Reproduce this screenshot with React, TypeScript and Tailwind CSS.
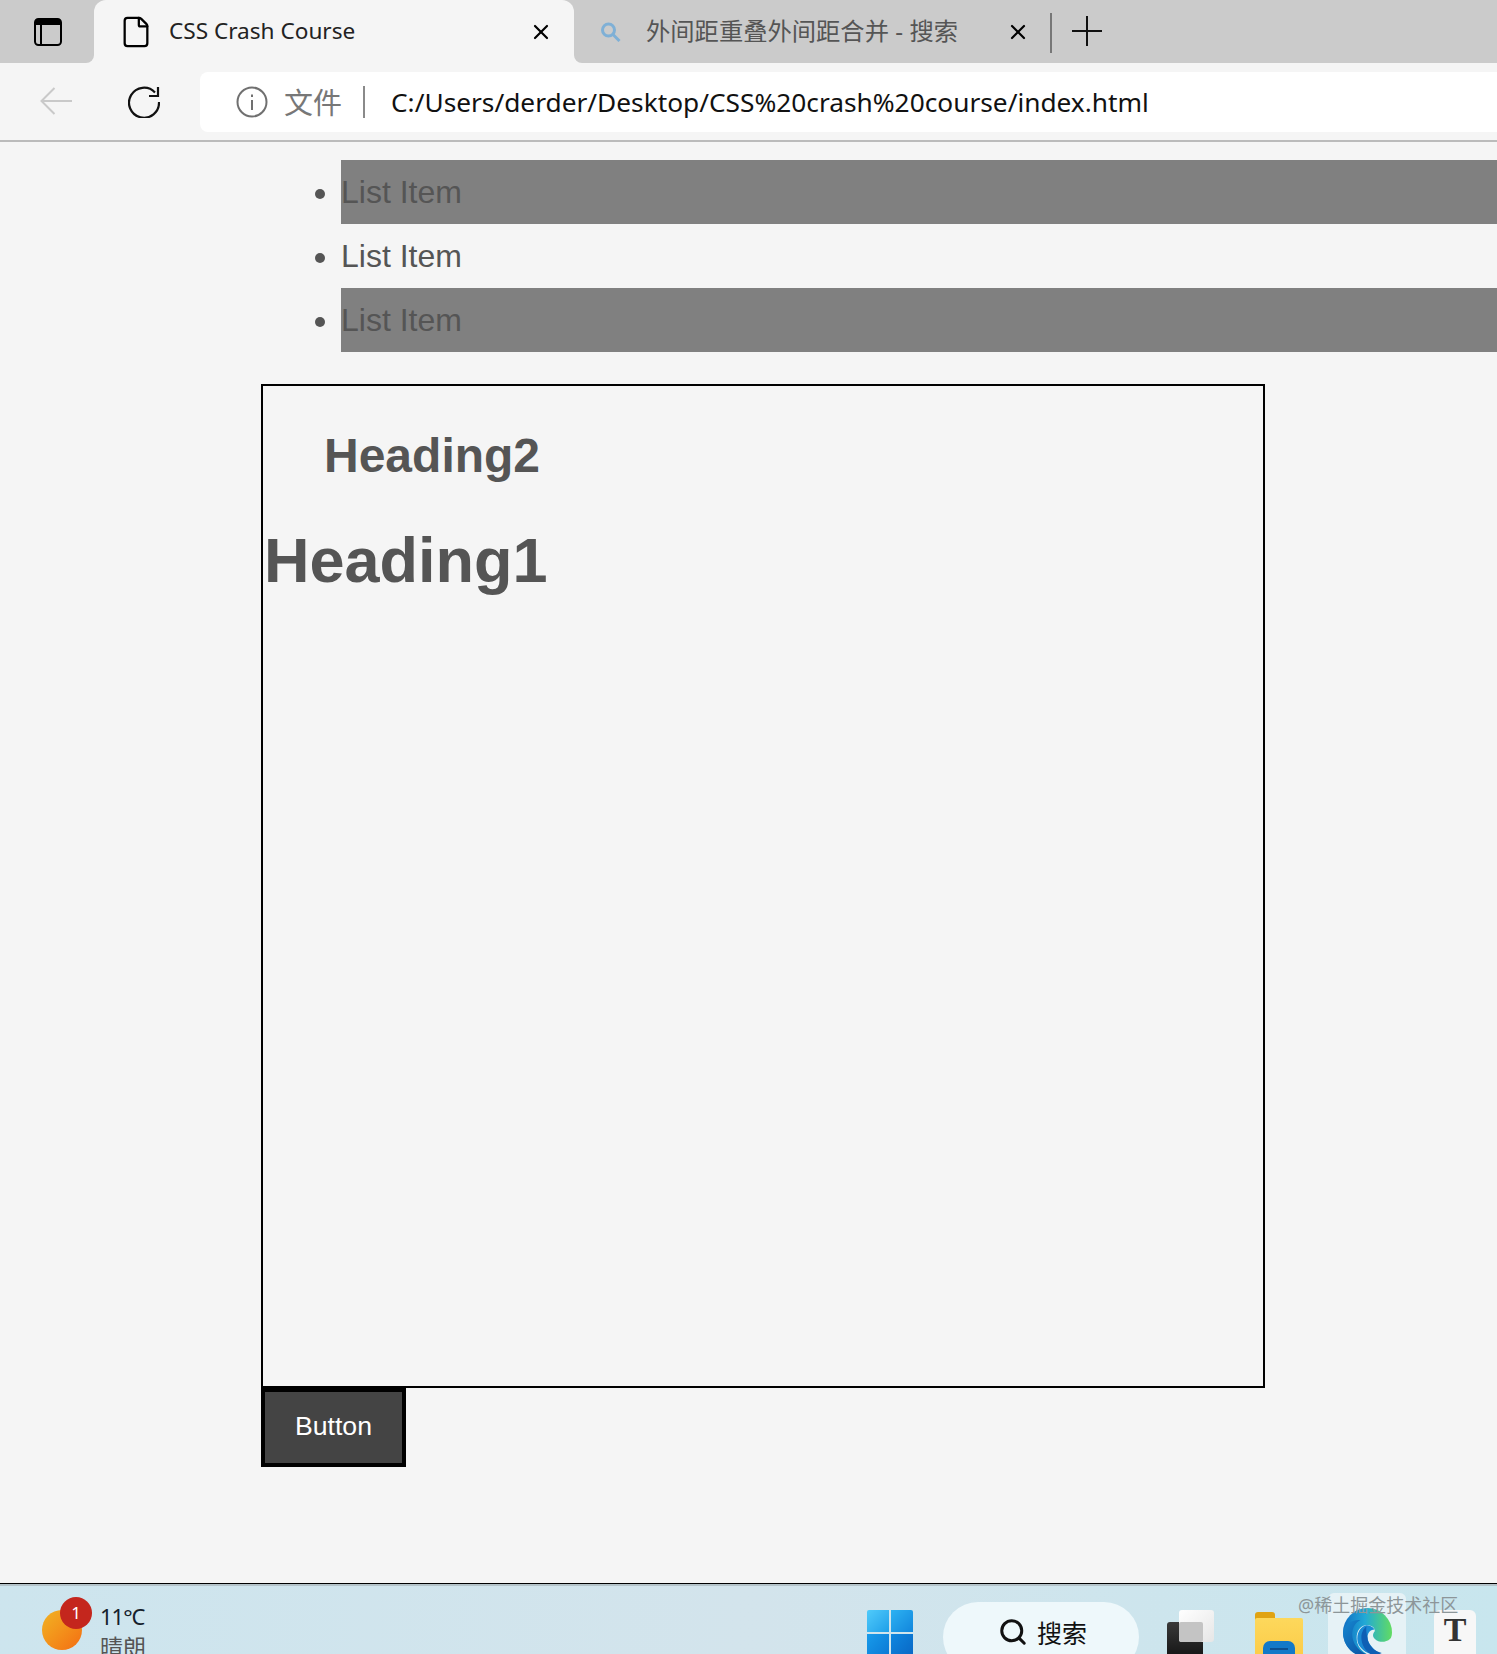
import { File, Search, X } from "lucide-react"

const uiFont = "font-['Noto_Sans','Noto_Sans_CJK_SC',sans-serif]"
const pageFont = "font-['Liberation_Sans',Arial,sans-serif]"

const SidebarIcon = () => (
  <svg width="28" height="28" viewBox="0 0 28 28" fill="none" className="text-black">
    <rect x="1" y="1" width="26" height="26" rx="3.5" stroke="currentColor" strokeWidth="2" />
    <path d="M1 4.5A3.5 3.5 0 0 1 4.5 1h19A3.5 3.5 0 0 1 27 4.5V7H1z" fill="currentColor" />
    <path d="M7 7v20" stroke="currentColor" strokeWidth="2" />
  </svg>
)

const BackIcon = () => (
  <svg width="32" height="28" viewBox="0 0 32 28" fill="none" stroke="#c9c9c9" strokeWidth="2">
    <path d="M32 14H1.5M14.5 1 1.5 14l13 13" />
  </svg>
)

const ReloadIcon = () => (
  <svg width="32" height="32" viewBox="0 0 32 32" fill="none" stroke="#111" strokeWidth="2.2">
    <path d="M27 6.5A15 15 0 1 0 31 16" />
    <path d="M30 1v9h-9" />
  </svg>
)

const InfoIcon = () => (
  <svg width="32" height="32" viewBox="0 0 32 32" fill="none" stroke="#707070" strokeWidth="2">
    <circle cx="16" cy="16" r="14.5" />
    <path d="M16 14v10M16 8.5v2.5" />
  </svg>
)

const TabSearch = () => (
  <svg width="21" height="20" viewBox="0 0 21 20" fill="none" stroke="#7fb0d6" strokeWidth="3">
    <circle cx="8.5" cy="8" r="6" />
    <path d="m13 12.5 6.5 6.5" />
  </svg>
)

const WindowsLogo = () => (
  <div className="grid h-[46px] w-[46px] shrink-0 grid-cols-2 gap-[2px] self-start">
    <div className="h-[22px] rounded-tl-[2px] bg-gradient-to-br from-[#4fcbfb] to-[#1d9fe8]" />
    <div className="h-[22px] rounded-tr-[2px] bg-gradient-to-br from-[#2db2f2] to-[#1286dc]" />
    <div className="h-[24px] bg-gradient-to-br from-[#189bea] to-[#0c77d4]" />
    <div className="h-[24px] bg-gradient-to-br from-[#0f87df] to-[#0a66c4]" />
  </div>
)

const EdgeLogo = () => (
  <svg width="49" height="49" viewBox="0 0 48 48" className="shrink-0">
    <defs>
      <linearGradient id="edgeRing" x1="0" y1="0.5" x2="1" y2="0.5">
        <stop offset="0" stopColor="#0f6fc4" />
        <stop offset="0.45" stopColor="#22a9d6" />
        <stop offset="1" stopColor="#62dc62" />
      </linearGradient>
      <linearGradient id="edgeBody" x1="0" y1="0" x2="1" y2="1">
        <stop offset="0" stopColor="#1587d0" />
        <stop offset="1" stopColor="#0b4a9c" />
      </linearGradient>
    </defs>
    <circle cx="24" cy="24" r="24" fill="url(#edgeRing)" />
    <path d="M48 27c-2 7-12 8-17 3-3-3-1-6 0-7 1-4-4-7-9-6-7 1-10 9-8 17 2 7 9 12 16 14h18z" fill="#e6f2f6" />
    <path d="M0 24c1-8 9-13 17-12-5 2-8 8-8 14 0 10 9 20 21 21-2 .6-4 1-6 1C10 48 0 37 0 24z" fill="url(#edgeBody)" />
    <path d="M14 30c0-7 4-12 9-13 3 0 6 1 8 4-5 0-7 4-7 8 0 5 5 11 11 15l-3 2c-10-1-18-8-18-16z" fill="#1a8ad4" />
    <path d="M24 29c0 6 6 14 14 15l-6 3c-9-2-14-10-14-18 0-5 2-9 5-11-0 0-1 4 1 11z" fill="#0f5fb4" />
  </svg>
)

const ListRow = ({ shaded }: { shaded?: boolean }) => (
  <li className={`h-16 text-[32px] leading-[64px] ${shaded ? "bg-[#808080]" : ""}`}>List Item</li>
)

const Taskbar = () => (
  <div className={`relative flex h-[71px] shrink-0 overflow-hidden border-t border-black ${uiFont}`}>
    <div className="absolute inset-x-0 top-0 h-[2px] bg-[#b4c3c9]" />
    <div className="flex flex-1 bg-gradient-to-r from-[#cde5ee] via-[#d3e4ec] to-[#c8e6ee]">
      <div className="relative ml-[42px] mt-[26px] h-10 w-10 shrink-0 rounded-full bg-gradient-to-br from-[#f0b323] to-[#f36c12]">
        <span className="absolute -top-[13px] left-[18px] flex h-8 w-8 items-center justify-center rounded-full bg-[#c4261d] text-[17px] text-white">
          1
        </span>
      </div>
      <div className="ml-[18px] mt-[17px] flex w-[50px] flex-col text-[22px] leading-[31px]">
        <span className="tracking-[-1px] text-[#15202b]">11°C</span>
        <span className="text-[23px] text-[#555]">晴朗</span>
      </div>
      <div className="ml-[717px] mt-[26px]">
        <WindowsLogo />
      </div>
      <div className="ml-[30px] mt-[18px] flex h-[70px] w-[196px] shrink-0 items-start gap-[9px] rounded-[35px] bg-[#eef8fb] pl-[55px] pt-[15px]">
        <Search size={30} strokeWidth={2.4} className="text-[#111]" />
        <span className="text-[25px] leading-[32px] text-[#111]">搜索</span>
      </div>
      <div className="relative ml-[28px] h-full w-[49px] shrink-0">
        <div className="absolute left-0 top-[38px] h-10 w-9 rounded-[3px] bg-gradient-to-b from-[#3a3a3a] to-[#111]" />
        <div className="absolute left-3 top-[26px] h-8 w-[35px] rounded-[3px] bg-gradient-to-br from-[#ffffff] to-[#e6e6e6]" />
        <div className="absolute left-3 top-[38px] h-5 w-6 rounded-[2px] bg-[#c4c4c4]" />
      </div>
      <div className="relative ml-[39px] mt-[28px] h-16 w-[48px] shrink-0">
        <div className="absolute left-0 top-0 h-4 w-5 rounded-t-[3px] bg-[#e0a313]" />
        <div className="absolute inset-x-0 top-[6px] h-14 rounded-[2px] bg-gradient-to-b from-[#fdd85c] to-[#fbc63d]" />
        <div className="absolute left-[8px] top-[29px] h-8 w-[32px] rounded-[7px] bg-[#1379c8]" />
        <div className="absolute left-[15px] top-[36px] h-[2px] w-[18px] bg-[#0b4f8f]" />
      </div>
      <div className="ml-[25px] mt-[9px] flex h-16 w-[78px] shrink-0 justify-center rounded-t-[6px] bg-[#e6f2f6] pt-[15px]">
        <EdgeLogo />
      </div>
      <div className="ml-[28px] mt-[26px] flex h-14 w-[42px] shrink-0 justify-center rounded-[6px] bg-[#f7f7f7] font-['Liberation_Serif',serif] text-[34px] font-bold leading-[40px] text-[#333]">
        T
      </div>
    </div>
    <span className="absolute left-[1298px] top-[9px] whitespace-nowrap text-[18px] leading-6 text-[#8d9699]">
      @稀土掘金技术社区
    </span>
  </div>
)

export default function App() {
  return (
    <div className={`flex h-[1654px] w-[1497px] flex-col overflow-hidden bg-[#f5f5f5] ${pageFont} text-[#555]`}>
      {/* tabs */}
      <div className={`flex h-[63px] shrink-0 ${uiFont}`}>
        <div className="flex w-[94px] shrink-0 items-center rounded-br-[8px] bg-[#cbcbcb] pl-[34px]">
          <SidebarIcon />
        </div>
        <div className="w-[480px] shrink-0 bg-[#cbcbcb]">
          <div className="flex h-full items-center rounded-t-[12px] bg-[#f5f5f5] pl-[25px] pr-[21px]">
            <File size={34} strokeWidth={1.6} className="text-black" />
            <span className="ml-[16px] flex-1 text-[22.6px] leading-none text-[#222]">CSS Crash Course</span>
            <X size={24} strokeWidth={2.2} className="text-black" />
          </div>
        </div>
        <div className="flex flex-1 items-start rounded-bl-[8px] bg-[#cbcbcb]">
          <div className="flex h-[63px] w-[476px] shrink-0 items-center pl-[26px] pr-[20px]">
            <TabSearch />
            <span className="ml-[25px] flex-1 whitespace-nowrap text-[24.3px] leading-none text-[#555]">外间距重叠外间距合并 - 搜索</span>
            <X size={24} strokeWidth={2.2} className="text-black" />
          </div>
          <div className="mt-[13px] h-10 w-[2px] bg-[#777]" />
          <svg width="30" height="30" viewBox="0 0 30 30" stroke="#111" strokeWidth="2" className="ml-[20px] mt-[16px]">
            <path d="M0 15h30M15 0v30" />
          </svg>
        </div>
      </div>
      {/* toolbar */}
      <div className={`flex h-[79px] shrink-0 items-start border-b-2 border-[#bbb] pt-[9px] ${uiFont}`}>
        <div className="ml-[40px] mt-[15px]">
          <BackIcon />
        </div>
        <div className="ml-[56px] mt-[14px]">
          <ReloadIcon />
        </div>
        <div className="ml-[40px] flex h-[60px] flex-1 items-center rounded-l-[8px] bg-white pl-[36px]">
          <InfoIcon />
          <span className="ml-[16px] text-[29px] leading-none text-[#777]">文件</span>
          <div className="ml-[21px] h-8 w-[2px] bg-[#8a8a8a]" />
          <span className="ml-[26px] text-[26.27px] leading-none text-[#111]">C:/Users/derder/Desktop/CSS%20crash%20course/index.html</span>
        </div>
      </div>
      {/* page */}
      <main className="ml-[261px] flex-1">
        <ul className="mb-8 mt-[18px] w-[1236px] list-disc pl-20">
          <ListRow shaded />
          <ListRow />
          <ListRow shaded />
        </ul>
        <div className="flex h-[1004px] w-[1004px] flex-col border-2 border-black">
          <h2 className="ml-[61px] mt-[42px] text-[48px] font-bold leading-[56px]">Heading2</h2>
          <h1 className="ml-[1px] mt-[39px] text-[63px] font-bold leading-[74px]">Heading1</h1>
        </div>
        <button className="block h-[79px] w-[145px] border-4 border-black bg-[#444] pb-[3px] text-[26.67px] text-white">
          Button
        </button>
      </main>
      <Taskbar />
    </div>
  )
}
